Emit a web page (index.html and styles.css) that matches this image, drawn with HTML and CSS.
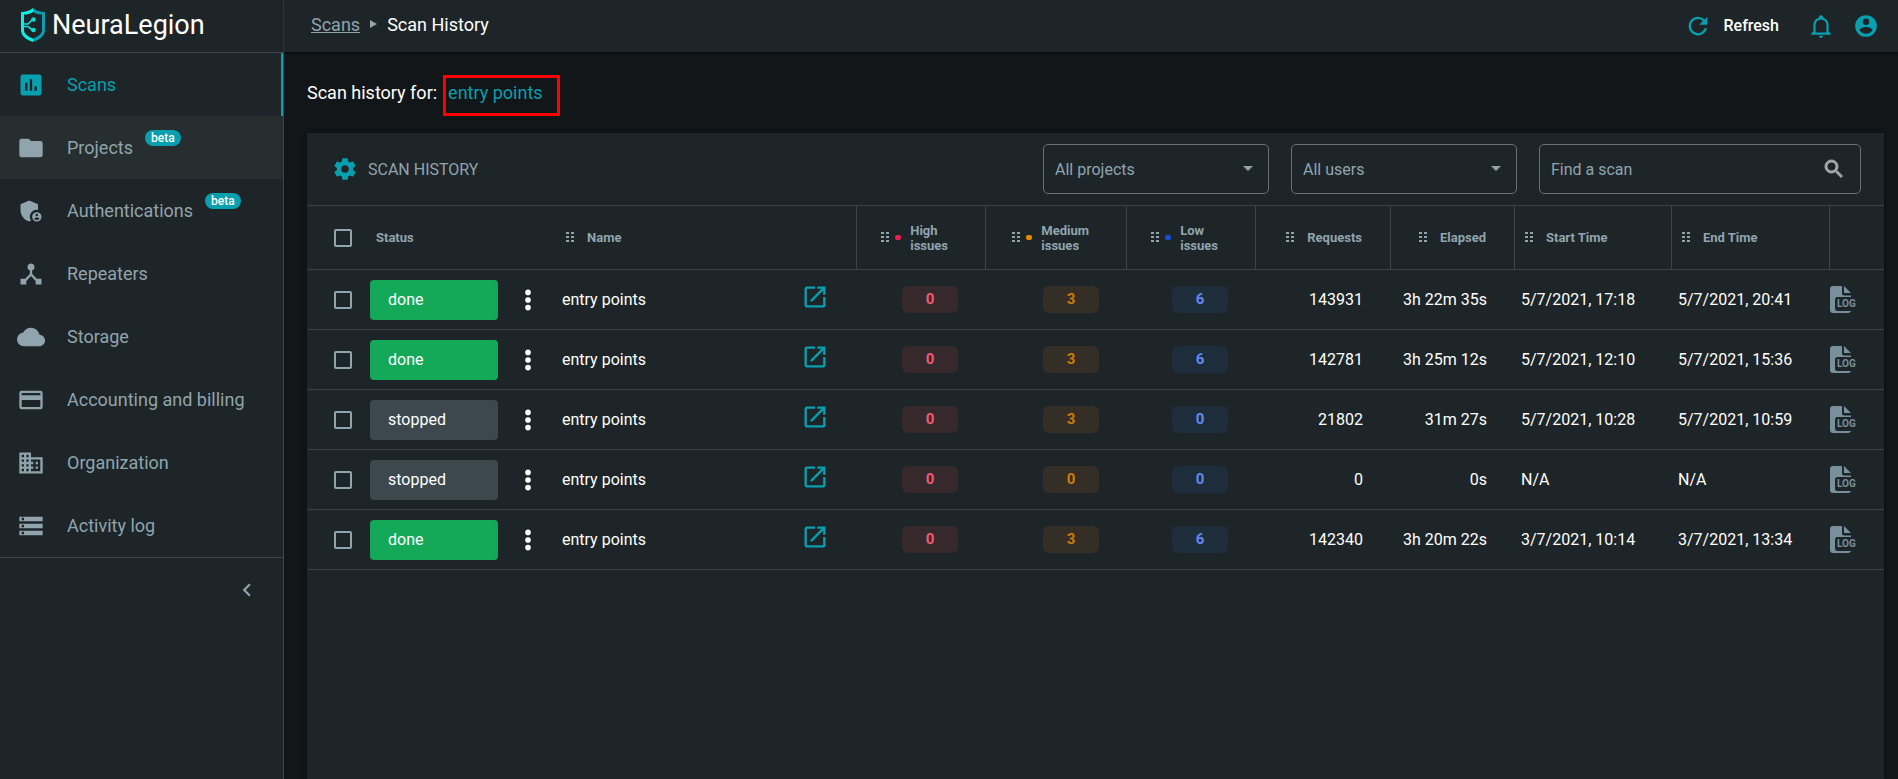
FILE: index.html
```html
<!DOCTYPE html>
<html lang="en">
<head>
    <meta charset="UTF-8">
    <meta name="viewport" content="width=device-width, initial-scale=1.0">
    <title>Scan History - NeuraLegion</title>
    <link rel="stylesheet" href="styles.css">
</head>
<body>
    <!-- shared icons -->
    <svg class="sprite" aria-hidden="true">
        <symbol id="grip" viewBox="0 0 8 11"><path d="M0 0h3v2H0zM5 0h3v2H5zM0 4h3v2H0zM5 4h3v2H5zM0 8h3v2H0zM5 8h3v2H5z"/></symbol>
        <symbol id="dots" viewBox="0 0 24 24"><circle cx="12" cy="5" r="2.6"/><circle cx="12" cy="12" r="2.6"/><circle cx="12" cy="19" r="2.6"/></symbol>
        <symbol id="open" viewBox="0 0 24 24"><path d="M19 19H5V5h7V3H5a2 2 0 0 0-2 2v14a2 2 0 0 0 2 2h14c1.100 0 2-.9 2-2v-7h-2v7zM14 3v2h3.590l-9.830 9.830 1.410 1.410L19 6.410V10h2V3h-7z"/></symbol>
        <symbol id="log" viewBox="0 0 27 27"><path d="M3 0h9v7.500a2 2 0 0 0 2 2h7V11H7.500A2.500 2.500 0 0 0 5 13.500v9A2.500 2.500 0 0 0 7.500 25H21c-.5 1.300-1.500 2-3 2H3a3 3 0 0 1-3-3V3a3 3 0 0 1 3-3zM14 0l7 7h-7z"/></symbol>
    </svg>

    <div class="app">
        <aside class="sidebar">
            <a class="logo" href="#">
                <svg width="24" height="34" viewBox="0 0 24 34">
                    <path fill="#0ff0e4" d="M12 0v4C9 6 6 6.500 3 6.500v15.500c0 4 4 6.500 9 8.500v3.500C5 31.500 0 28 0 22V4c4.500 0 9-1.500 12-4z"/>
                    <path fill="#0a9eb0" d="M12 0v4c3 2 6 2.500 9 2.500v15.500c0 4-4 6.500-9 8.500v3.500c7-2.500 12-6 12-12V4c-4.500 0-9-1.500-12-4z"/>
                    <path fill="none" stroke="#0bdcd9" stroke-width="1.700" d="M2 16h5l5-5M2 18.500h5l5 4"/>
                    <circle fill="#0bdcd9" cx="12.500" cy="11.500" r="2.300"/><circle fill="#0bdcd9" cx="12.500" cy="22" r="2.300"/>
                </svg>
                <span>NeuraLegion</span>
            </a>
            <nav class="menu">
                <a class="menu-item active" href="#">
                    <svg viewBox="0 0 24 24"><path d="M19 3H5a2 2 0 0 0-2 2v14a2 2 0 0 0 2 2h14a2 2 0 0 0 2-2V5a2 2 0 0 0-2-2zM9 17H7v-7h2v7zm4 0h-2V7h2v10zm4 0h-2v-4h2v4z"/></svg>
                    Scans
                </a>
                <a class="menu-item hovered" href="#">
                    <svg viewBox="0 0 24 24"><path d="M10 4H4a2 2 0 0 0-2 2v12a2 2 0 0 0 2 2h16a2 2 0 0 0 2-2V8a2 2 0 0 0-2-2h-8l-2-2z"/></svg>
                    Projects <span class="beta">beta</span>
                </a>
                <a class="menu-item" href="#">
                    <svg viewBox="0 0 24 24"><path d="M17 11c.34 0 .67.04 1 .09V6.270L10.500 3 3 6.270v4.910c0 4.540 3.200 8.790 7.500 9.820.55-.13 1.080-.32 1.600-.55A6 6 0 0 1 17 11z"/><path fill-rule="evenodd" d="M17 13a4 4 0 1 0 0 8 4 4 0 0 0 0-8zm0 1.400a1.100 1.100 0 1 1 0 2.200 1.100 1.100 0 0 1 0-2.200zm0 5.400a2.800 2.800 0 0 1-2.200-1.200c.04-.7 1.500-1.100 2.200-1.100s2.160.4 2.200 1.100a2.800 2.800 0 0 1-2.200 1.200z"/></svg>
                    Authentications <span class="beta">beta</span>
                </a>
                <a class="menu-item" href="#">
                    <svg viewBox="0 0 24 24"><path d="M17 16l-4-4V8.820A3 3 0 0 0 12 3a3 3 0 0 0-1 5.820V12l-4 4H3v5h5v-3.050l4-4.200 4 4.200V21h5v-5h-4z"/></svg>
                    Repeaters
                </a>
                <a class="menu-item" href="#">
                    <svg viewBox="0 0 24 24"><path d="M19.350 10.040A7.490 7.490 0 0 0 12 4C9.110 4 6.600 5.640 5.350 8.040A5.994 5.994 0 0 0 0 14c0 3.310 2.690 6 6 6h13c2.760 0 5-2.240 5-5 0-2.640-2.050-4.780-4.650-4.960z"/></svg>
                    Storage
                </a>
                <a class="menu-item" href="#">
                    <svg viewBox="0 0 24 24"><path d="M20 4H4a2 2 0 0 0-2 2v12a2 2 0 0 0 2 2h16a2 2 0 0 0 2-2V6a2 2 0 0 0-2-2zm0 14H4v-6h16v6zm0-10H4V6h16v2z"/></svg>
                    Accounting and billing
                </a>
                <a class="menu-item" href="#">
                    <svg viewBox="0 0 24 24"><path d="M12 7V3H2v18h20V7H12zM6 19H4v-2h2v2zm0-4H4v-2h2v2zm0-4H4V9h2v2zm0-4H4V5h2v2zm4 12H8v-2h2v2zm0-4H8v-2h2v2zm0-4H8V9h2v2zm0-4H8V5h2v2zm10 12h-8v-2h2v-2h-2v-2h2v-2h-2V9h8v10zm-2-8h-2v2h2v-2zm0 4h-2v2h2v-2z"/></svg>
                    Organization
                </a>
                <a class="menu-item" href="#">
                    <svg viewBox="0 0 24 24"><path d="M2 20h20v-4H2v4zm2-3h2v2H4v-2zM2 4v4h20V4H2zm4 3H4V5h2v2zm-4 7h20v-4H2v4zm2-3h2v2H4v-2z"/></svg>
                    Activity log
                </a>
            </nav>
            <div class="collapse">
                <button class="icon-button" aria-label="Collapse menu">
                    <svg viewBox="0 0 24 24"><path d="M15.400 7.400L14 6l-6 6 6 6 1.400-1.400L10.800 12z"/></svg>
                </button>
            </div>
        </aside>

        <div class="page">
            <header class="topbar">
                <div class="breadcrumbs">
                    <a href="#">Scans</a>
                    <svg width="7" height="8" viewBox="0 0 7 8"><path d="M0 0l7 4-7 4z"/></svg>
                    <span>Scan History</span>
                </div>
                <div class="actions">
                    <button class="refresh">
                        <svg viewBox="0 0 24 24"><path d="M17.650 6.350A8 8 0 1 0 19.730 14h-2.080A6 6 0 1 1 12 6c1.660 0 3.140.69 4.220 1.780L13 11h7V4l-2.350 2.350z"/></svg>
                        Refresh
                    </button>
                    <button class="icon-button" aria-label="Notifications">
                        <svg viewBox="0 0 24 24"><path d="M10 21h4a2 2 0 0 1-4 0zm11-2v1H3v-1l2-2v-6c0-3.100 2.030-5.830 5-6.710V4a2 2 0 0 1 4 0v.29c2.970.88 5 3.610 5 6.710v6l2 2zm-4-8a5 5 0 0 0-10 0v7h10v-7z"/></svg>
                    </button>
                    <button class="icon-button" aria-label="Account">
                        <svg viewBox="0 0 24 24"><path d="M12 2a10 10 0 1 0 0 20 10 10 0 0 0 0-20zm0 3a3 3 0 1 1 0 6 3 3 0 0 1 0-6zm0 14.200a7.200 7.200 0 0 1-6-3.220c.03-1.990 4-3.080 6-3.080s5.970 1.090 6 3.080a7.200 7.200 0 0 1-6 3.220z"/></svg>
                    </button>
                </div>
            </header>

            <main class="content">
                <h1 class="title">Scan history for: <a class="marked" href="#">entry points</a></h1>

                <section class="card">
                    <div class="toolbar">
                        <button class="icon-button" aria-label="Table settings">
                            <svg viewBox="0 0 24 24"><path d="M19.430 12.980c.04-.32.07-.64.07-.98s-.03-.66-.07-.98l2.110-1.650a.5.5 0 0 0 .12-.64l-2-3.460a.5.5 0 0 0-.61-.22l-2.490 1a7.300 7.300 0 0 0-1.690-.98l-.38-2.650A.49.49 0 0 0 14 2h-4a.49.49 0 0 0-.49.42l-.38 2.650c-.61.25-1.170.59-1.690.98l-2.490-1a.49.49 0 0 0-.61.22l-2 3.460a.5.5 0 0 0 .12.64l2.110 1.650a7.900 7.900 0 0 0 0 1.960l-2.110 1.650a.5.5 0 0 0-.12.64l2 3.460c.12.22.39.3.61.22l2.490-1c.52.4 1.080.73 1.690.98l.38 2.650c.03.24.24.42.49.42h4c.25 0 .46-.18.49-.42l.38-2.650a7.300 7.300 0 0 0 1.690-.98l2.490 1c.23.09.49 0 .61-.22l2-3.460a.5.5 0 0 0-.12-.64l-2.110-1.650zM12 15.500a3.500 3.500 0 1 1 0-7 3.500 3.500 0 0 1 0 7z"/></svg>
                        </button>
                        <h2>SCAN HISTORY</h2>
                        <div class="filters">
                            <div class="field">
                                <select aria-label="Project"><option>All projects</option></select>
                                <svg width="10" height="5" viewBox="0 0 10 5"><path d="M0 0h10L5 5z"/></svg>
                            </div>
                            <div class="field">
                                <select aria-label="User"><option>All users</option></select>
                                <svg width="10" height="5" viewBox="0 0 10 5"><path d="M0 0h10L5 5z"/></svg>
                            </div>
                            <div class="field search">
                                <input type="text" placeholder="Find a scan" aria-label="Find a scan">
                                <svg width="24" height="24" viewBox="0 0 24 24"><path stroke="currentColor" d="M15.500 14h-.79l-.28-.27A6.500 6.500 0 1 0 13.730 14.430l.27.28v.79l5 4.990L20.490 19l-4.990-5zm-6 0a4.500 4.500 0 1 1 0-9 4.500 4.500 0 0 1 0 9z"/></svg>
                            </div>
                        </div>
                    </div>

                    <table class="scans">
                        <colgroup>
                            <col class="c-check"><col class="c-status"><col class="c-menu"><col>
                            <col class="c-issues"><col class="c-medium"><col class="c-issues">
                            <col class="c-requests"><col class="c-elapsed"><col class="c-start"><col class="c-end"><col class="c-log">
                        </colgroup>
                        <thead>
                            <tr>
                                <th class="check"><input type="checkbox" aria-label="Select all"></th>
                                <th class="status">Status</th>
                                <th></th>
                                <th class="line name"><div class="head"><svg class="grip"><use href="#grip"/></svg>Name</div></th>
                                <th class="line issues"><div class="head"><svg class="grip"><use href="#grip"/></svg><i class="dot high"></i><span>High<br>issues</span></div></th>
                                <th class="line issues"><div class="head"><svg class="grip"><use href="#grip"/></svg><i class="dot medium"></i><span>Medium<br>issues</span></div></th>
                                <th class="line issues"><div class="head"><svg class="grip"><use href="#grip"/></svg><i class="dot low"></i><span>Low<br>issues</span></div></th>
                                <th class="line num"><div class="head"><svg class="grip"><use href="#grip"/></svg>Requests</div></th>
                                <th class="line num"><div class="head"><svg class="grip"><use href="#grip"/></svg>Elapsed</div></th>
                                <th class="line time"><div class="head"><svg class="grip"><use href="#grip"/></svg>Start Time</div></th>
                                <th class="line time"><div class="head"><svg class="grip"><use href="#grip"/></svg>End Time</div></th>
                                <th></th>
                            </tr>
                        </thead>
                        <tbody>
                            <tr>
                                <td class="check"><input type="checkbox" aria-label="Select scan"></td>
                                <td><span class="state done">done</span></td>
                                <td><button class="icon-button more" aria-label="More"><svg><use href="#dots"/></svg></button></td>
                                <td class="name"><div>entry points<a href="#" aria-label="Open scan"><svg><use href="#open"/></svg></a></div></td>
                                <td class="num"><span class="count high">0</span></td>
                                <td class="num"><span class="count medium">3</span></td>
                                <td class="num"><span class="count low">6</span></td>
                                <td class="num">143931</td>
                                <td class="num">3h 22m 35s</td>
                                <td class="time">5/7/2021, 17:18</td>
                                <td class="time">5/7/2021, 20:41</td>
                                <td><button class="icon-button log"><svg><use href="#log"/></svg><span>LOG</span></button></td>
                            </tr>
                            <tr>
                                <td class="check"><input type="checkbox" aria-label="Select scan"></td>
                                <td><span class="state done">done</span></td>
                                <td><button class="icon-button more" aria-label="More"><svg><use href="#dots"/></svg></button></td>
                                <td class="name"><div>entry points<a href="#" aria-label="Open scan"><svg><use href="#open"/></svg></a></div></td>
                                <td class="num"><span class="count high">0</span></td>
                                <td class="num"><span class="count medium">3</span></td>
                                <td class="num"><span class="count low">6</span></td>
                                <td class="num">142781</td>
                                <td class="num">3h 25m 12s</td>
                                <td class="time">5/7/2021, 12:10</td>
                                <td class="time">5/7/2021, 15:36</td>
                                <td><button class="icon-button log"><svg><use href="#log"/></svg><span>LOG</span></button></td>
                            </tr>
                            <tr>
                                <td class="check"><input type="checkbox" aria-label="Select scan"></td>
                                <td><span class="state">stopped</span></td>
                                <td><button class="icon-button more" aria-label="More"><svg><use href="#dots"/></svg></button></td>
                                <td class="name"><div>entry points<a href="#" aria-label="Open scan"><svg><use href="#open"/></svg></a></div></td>
                                <td class="num"><span class="count high">0</span></td>
                                <td class="num"><span class="count medium">3</span></td>
                                <td class="num"><span class="count low">0</span></td>
                                <td class="num">21802</td>
                                <td class="num">31m 27s</td>
                                <td class="time">5/7/2021, 10:28</td>
                                <td class="time">5/7/2021, 10:59</td>
                                <td><button class="icon-button log"><svg><use href="#log"/></svg><span>LOG</span></button></td>
                            </tr>
                            <tr>
                                <td class="check"><input type="checkbox" aria-label="Select scan"></td>
                                <td><span class="state">stopped</span></td>
                                <td><button class="icon-button more" aria-label="More"><svg><use href="#dots"/></svg></button></td>
                                <td class="name"><div>entry points<a href="#" aria-label="Open scan"><svg><use href="#open"/></svg></a></div></td>
                                <td class="num"><span class="count high">0</span></td>
                                <td class="num"><span class="count medium">0</span></td>
                                <td class="num"><span class="count low">0</span></td>
                                <td class="num">0</td>
                                <td class="num">0s</td>
                                <td class="time">N/A</td>
                                <td class="time">N/A</td>
                                <td><button class="icon-button log"><svg><use href="#log"/></svg><span>LOG</span></button></td>
                            </tr>
                            <tr>
                                <td class="check"><input type="checkbox" aria-label="Select scan"></td>
                                <td><span class="state done">done</span></td>
                                <td><button class="icon-button more" aria-label="More"><svg><use href="#dots"/></svg></button></td>
                                <td class="name"><div>entry points<a href="#" aria-label="Open scan"><svg><use href="#open"/></svg></a></div></td>
                                <td class="num"><span class="count high">0</span></td>
                                <td class="num"><span class="count medium">3</span></td>
                                <td class="num"><span class="count low">6</span></td>
                                <td class="num">142340</td>
                                <td class="num">3h 20m 22s</td>
                                <td class="time">3/7/2021, 10:14</td>
                                <td class="time">3/7/2021, 13:34</td>
                                <td><button class="icon-button log"><svg><use href="#log"/></svg><span>LOG</span></button></td>
                            </tr>
                        </tbody>
                    </table>
                </section>
            </main>
        </div>
    </div>
</body>
</html>
```
FILE: styles.css
```css
* {
    box-sizing: border-box;
}
body {
    margin: 0;
    background: #121619;
    color: #fff;
    font-family: Roboto, sans-serif;
    font-size: 16px;
}
a {
    color: inherit;
    text-decoration: none;
}
button, select, input {
    font: inherit;
    color: inherit;
}
svg {
    display: block;
    fill: currentColor;
}
.sprite {
    position: absolute;
    width: 0;
    height: 0;
}
.app {
    display: flex;
    min-height: 100vh;
}

/* Sidebar */
.sidebar {
    flex: 0 0 284px;
    background: #1e2528;
    border-right: 1px solid #3f4447;
    color: #90a4ae;
}
.logo {
    display: flex;
    align-items: center;
    gap: 7px;
    height: 53px;
    padding: 0 21px 3px;
    border-bottom: 1px solid #3f4447;
    color: #fff;
    font-size: 27px;
}
.menu {
    border-bottom: 1px solid #3f4447;
}
.menu-item {
    display: flex;
    align-items: center;
    height: 63px;
    padding-left: 17px;
    font-size: 18px;
}
.menu-item svg {
    width: 28px;
    height: 28px;
    margin-right: 22px;
}
.menu-item.active {
    color: #089fae;
    border-right: 2px solid #089fae;
}
.menu-item.hovered, .menu-item:hover {
    background: #272e30;
}
.beta {
    align-self: flex-start;
    margin: 14px 0 0 12px;
    padding: 0 6px;
    border-radius: 8px;
    background: #089fae;
    color: #fff;
    font-size: 12px;
    font-weight: 500;
    line-height: 16px;
}
.collapse {
    display: flex;
    justify-content: flex-end;
    padding: 19px 23px;
}
.icon-button {
    display: block;
    padding: 0;
    border: none;
    background: none;
    color: #089fae;
    cursor: pointer;
}
.icon-button svg {
    width: 26px;
    height: 26px;
}
.collapse .icon-button {
    color: #90a4ae;
}

/* Top bar */
.page {
    flex: 1;
    min-width: 0;
    display: flex;
    flex-direction: column;
}
.topbar {
    display: flex;
    align-items: center;
    justify-content: space-between;
    height: 52px;
    padding: 0 19px 4px 27px;
    background: #1e2528;
    box-shadow: 0 1px 3px rgba(0, 0, 0, 0.6);
}
.breadcrumbs {
    display: flex;
    align-items: center;
    gap: 10px;
    color: #90a4ae;
    font-size: 18px;
}
.breadcrumbs a {
    text-decoration: underline;
}
.breadcrumbs span {
    color: #fff;
}
.actions {
    display: flex;
    align-items: center;
    gap: 19px;
    padding-top: 3px;
}
.refresh {
    display: flex;
    align-items: center;
    gap: 12px;
    padding: 0;
    margin-right: 10px;
    border: none;
    background: none;
    font-weight: 500;
    cursor: pointer;
}
.refresh svg {
    width: 28px;
    height: 28px;
    color: #089fae;
}

/* Content */
.content {
    flex: 1;
    display: flex;
    flex-direction: column;
    padding: 23px 14px 0 23px;
}
.title {
    display: flex;
    align-items: baseline;
    gap: 6px;
    margin: 0 0 17px;
    font-size: 18px;
    font-weight: 400;
    line-height: 21px;
}
.marked {
    padding: 4px 14px 10px 2px;
    border: 3px solid #f00;
    color: #089fae;
}
.card {
    flex: 1;
    background: #1e2528;
    box-shadow: 0 0 4px rgba(0, 0, 0, 0.4);
}
.toolbar {
    display: flex;
    align-items: center;
    height: 73px;
    padding: 0 23px 0 25px;
    border-bottom: 1px solid #3b4246;
    color: #90a4ae;
}
.toolbar h2 {
    flex: 1;
    margin: 0 0 0 10px;
    font-size: 16px;
    font-weight: 400;
}
.filters {
    display: flex;
    gap: 22px;
}
.field {
    position: relative;
    width: 226px;
}
.field.search {
    width: 322px;
}
.field select, .field input {
    display: block;
    appearance: none;
    width: 100%;
    height: 50px;
    padding: 0 11px;
    border: 1px solid #6b7073;
    border-radius: 5px;
    background: transparent;
}
.field input::placeholder {
    color: #90a4ae;
    opacity: 1;
}
/* The icon sits on top of the control */
.field svg {
    position: absolute;
    top: 22px;
    right: 16px;
    pointer-events: none;
}
.field.search svg {
    top: 13px;
    right: 15px;
    color: #a5a8a9;
}

/* Table */
.scans {
    width: 100%;
    table-layout: fixed;
    border-collapse: separate;
    border-spacing: 0;
}
.c-check { width: 63px; }
.c-status { width: 142px; }
.c-menu { width: 42px; }
.c-issues { width: 129px; }
.c-medium { width: 141px; }
.c-requests { width: 135px; }
.c-elapsed { width: 124px; }
.c-start { width: 157px; }
.c-end { width: 158px; }
.c-log { width: 54px; }
.scans th, .scans td {
    padding: 0;
    border-bottom: 1px solid #3b4246;
    text-align: left;
    white-space: nowrap;
}
.scans th {
    height: 64px;
    color: #90a4ae;
    font-size: 13px;
    font-weight: 700;
    line-height: 15px;
}
.scans td {
    height: 60px;
}
.scans th.line {
    border-right: 1px solid #3b464a;
}
.scans .check {
    padding-left: 27px;
}
.check input {
    display: block;
    appearance: none;
    width: 18px;
    height: 18px;
    margin: 0;
    border: 2px solid #90a4ae;
    border-radius: 2px;
}
.scans .status {
    padding-left: 6px;
}
.head {
    display: flex;
    align-items: center;
}
.grip {
    width: 8px;
    height: 11px;
    margin-right: 13px;
}
.scans th.name {
    padding-left: 12px;
}
.scans td.name {
    padding: 0 28px 0 8px;
}
.name > div {
    display: flex;
    align-items: center;
}
.name a {
    margin-left: auto;
    padding-bottom: 6px;
    color: #089fae;
}
.name a svg {
    width: 28px;
    height: 28px;
}
.scans .num {
    padding-right: 28px;
    text-align: right;
}
.scans .issues {
    padding-right: 37px;
}
.num .head, .issues .head {
    justify-content: flex-end;
}
.issues .grip {
    margin-right: 6px;
}
.dot {
    width: 6px;
    height: 5px;
    margin-right: 9px;
    border-radius: 2px;
}
.dot.high { background: #e91e55; }
.dot.medium { background: #e08b00; }
.dot.low { background: #1f4bdc; }
.scans .time {
    padding-left: 6px;
}
.scans th.time {
    padding-left: 10px;
}
.state {
    display: block;
    width: 128px;
    padding-left: 18px;
    border-radius: 4px;
    background: #3c484e;
    line-height: 40px;
}
.state.done {
    background: #14a958;
}
.more {
    margin-left: 3px;
    color: #fff;
}
.count {
    display: inline-block;
    width: 56px;
    border-radius: 6px;
    font-size: 15px;
    font-weight: 700;
    line-height: 27px;
    text-align: center;
}
.count.high {
    background: #35292b;
    color: #f4567a;
}
.count.medium {
    background: #352e26;
    color: #ce7c05;
}
.count.low {
    background: #1e2d3b;
    color: #6189f2;
}
.log {
    position: relative;
    color: #78909c;
}
.log svg {
    width: 27px;
    height: 27px;
}
/* Label over the sheet icon */
.log span {
    position: absolute;
    left: 7px;
    bottom: 3px;
    font-size: 10px;
    font-weight: 700;
    line-height: 12px;
}
```
